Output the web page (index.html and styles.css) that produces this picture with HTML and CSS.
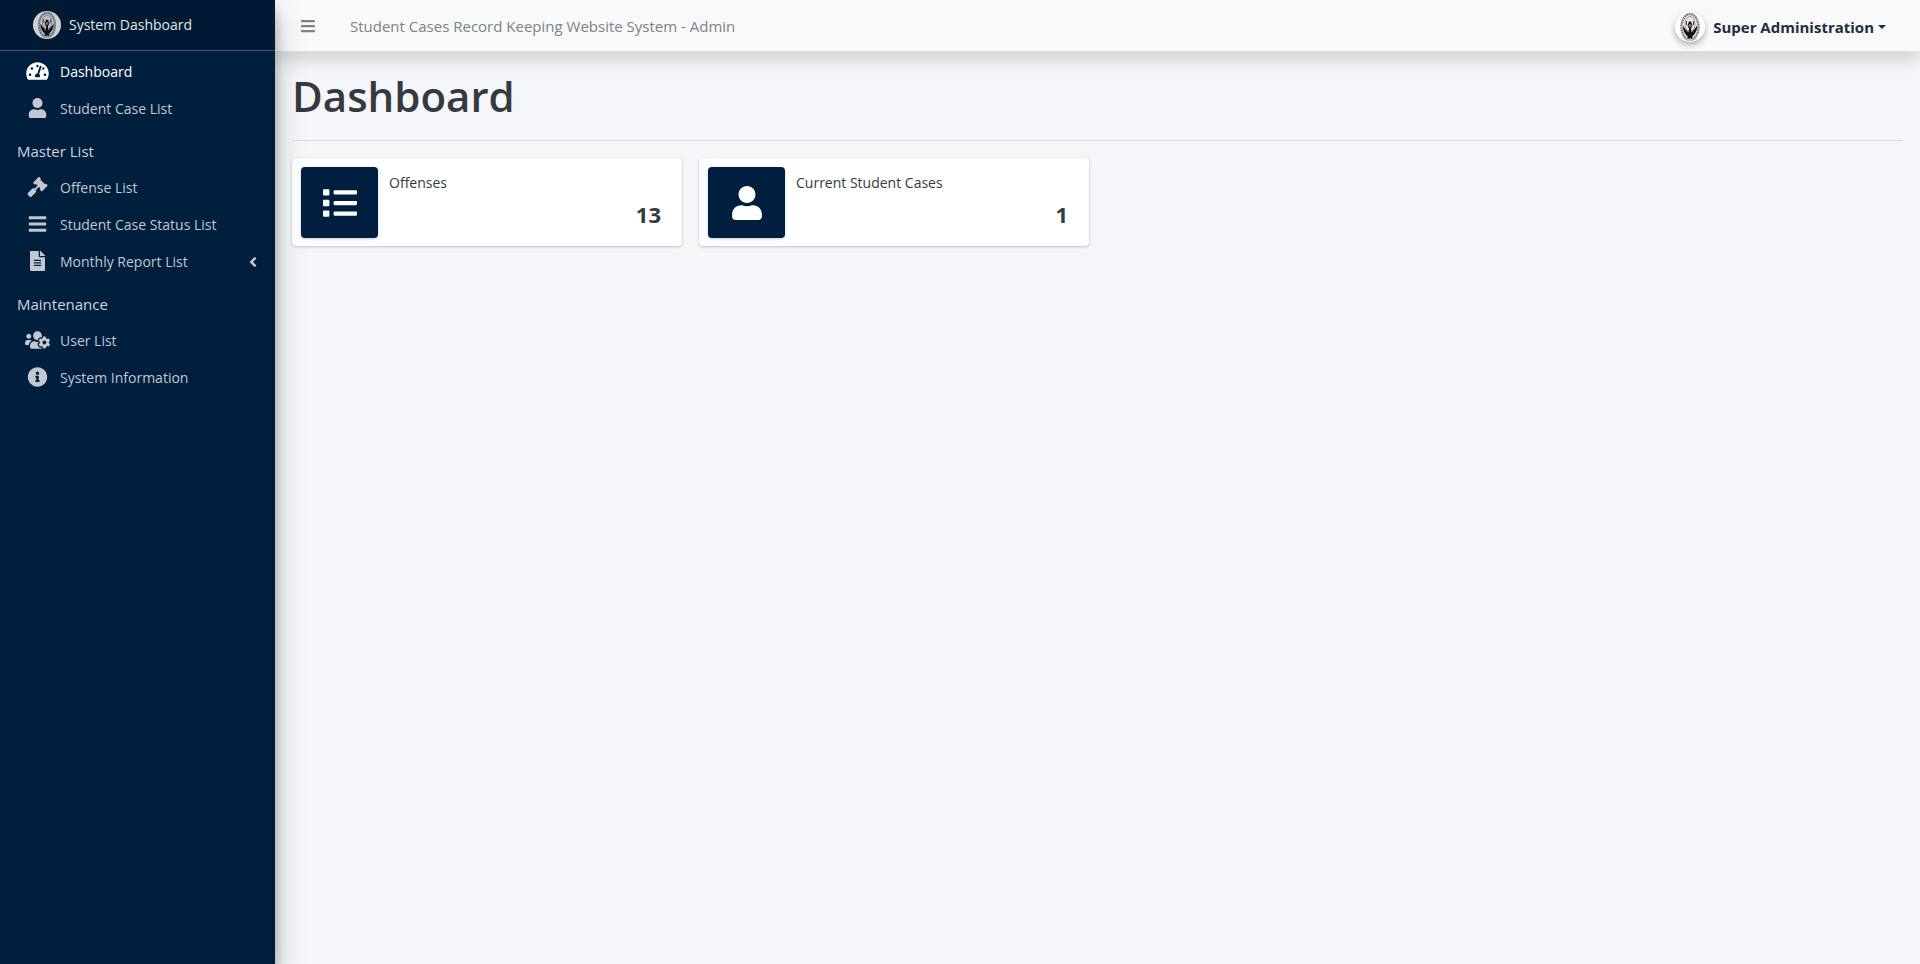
FILE: index.html
```html
<!DOCTYPE html>
<html lang="en">
<head>
<meta charset="utf-8">
<title>Student Cases Record Keeping Website System - Admin</title>
<link rel="stylesheet" href="styles.css">
</head>
<body>
<svg class="sprite" aria-hidden="true">
  <symbol id="i-gauge" viewBox="0 0 576 512"><path d="M288 32C128.94 32 0 160.94 0 320c0 52.8 14.25 102.26 39.06 144.8 5.61 9.62 16.3 15.2 27.44 15.2h443c11.14 0 21.83-5.58 27.44-15.2C561.75 422.26 576 372.8 576 320c0-159.06-128.94-288-288-288zm0 64c14.71 0 26.58 10.13 30.32 23.65-1.11 2.26-2.64 4.23-3.45 6.67l-9.22 27.67c-5.13 3.49-10.97 6.01-17.64 6.01-17.67 0-32-14.33-32-32S270.33 96 288 96zM96 384c-17.67 0-32-14.33-32-32s14.33-32 32-32 32 14.33 32 32-14.33 32-32 32zm48-160c-17.67 0-32-14.33-32-32s14.33-32 32-32 32 14.33 32 32-14.33 32-32 32zm246.77-72.41l-61.33 184C343.13 347.33 352 364.54 352 384c0 11.72-3.38 22.55-8.88 32H232.88c-5.5-9.45-8.88-20.28-8.88-32 0-33.94 26.5-61.43 59.9-63.59l61.34-184.01c4.17-12.56 17.73-19.45 30.36-15.17 12.57 4.19 19.35 17.79 15.17 30.36zm14.66 57.2l15.52-46.55c3.47-1.29 7.13-2.23 11.05-2.23 17.67 0 32 14.33 32 32s-14.33 32-32 32c-11.38-.01-20.89-6.28-26.57-15.22zM480 384c-17.67 0-32-14.33-32-32s14.33-32 32-32 32 14.33 32 32-14.33 32-32 32z"/></symbol>
  <symbol id="i-user" viewBox="0 0 448 512"><path d="M224 256c70.7 0 128-57.3 128-128S294.7 0 224 0 96 57.3 96 128s57.3 128 128 128zm89.6 32h-16.7c-22.2 10.2-46.9 16-72.9 16s-50.6-5.8-72.9-16h-16.7C60.2 288 0 348.2 0 422.4V464c0 26.5 21.5 48 48 48h352c26.5 0 48-21.5 48-48v-41.6c0-74.2-60.2-134.4-134.4-134.4z"/></symbol>
  <symbol id="i-gavel" viewBox="0 0 512 512"><path d="M504.971 199.362l-22.627-22.627c-9.373-9.373-24.569-9.373-33.941 0l-5.657 5.657L329.608 69.255l5.657-5.657c9.373-9.373 9.373-24.569 0-33.941L312.638 7.029c-9.373-9.373-24.569-9.373-33.941 0L154.246 131.48c-9.373 9.373-9.373 24.569 0 33.941l22.627 22.627c9.373 9.373 24.569 9.373 33.941 0l5.657-5.657 39.598 39.598-81.04 81.04-5.657-5.657c-12.497-12.497-32.758-12.497-45.255 0L9.373 412.118c-12.497 12.497-12.497 32.758 0 45.255l45.255 45.255c12.497 12.497 32.758 12.497 45.255 0l114.745-114.745c12.497-12.497 12.497-32.758 0-45.255l-5.657-5.657 81.04-81.04 39.598 39.598-5.657 5.657c-9.373 9.373-9.373 24.569 0 33.941l22.627 22.627c9.373 9.373 24.569 9.373 33.941 0l124.451-124.451c9.372-9.372 9.372-24.568 0-33.941z"/></symbol>
  <symbol id="i-bars" viewBox="0 0 448 512"><path d="M16 132h416c8.837 0 16-7.163 16-16V76c0-8.837-7.163-16-16-16H16C7.163 60 0 67.163 0 76v40c0 8.837 7.163 16 16 16zm0 160h416c8.837 0 16-7.163 16-16v-40c0-8.837-7.163-16-16-16H16c-8.837 0-16 7.163-16 16v40c0 8.837 7.163 16 16 16zm0 160h416c8.837 0 16-7.163 16-16v-40c0-8.837-7.163-16-16-16H16c-8.837 0-16 7.163-16 16v40c0 8.837 7.163 16 16 16z"/></symbol>
  <symbol id="i-file" viewBox="0 0 384 512"><path d="M224 136V0H24C10.7 0 0 10.7 0 24v464c0 13.3 10.7 24 24 24h336c13.3 0 24-10.7 24-24V160H248c-13.2 0-24-10.8-24-24zm64 236c0 6.6-5.4 12-12 12H108c-6.6 0-12-5.4-12-12v-8c0-6.6 5.4-12 12-12h168c6.6 0 12 5.4 12 12v8zm0-64c0 6.6-5.4 12-12 12H108c-6.6 0-12-5.4-12-12v-8c0-6.6 5.4-12 12-12h168c6.6 0 12 5.4 12 12v8zm0-72v8c0 6.6-5.4 12-12 12H108c-6.6 0-12-5.4-12-12v-8c0-6.6 5.4-12 12-12h168c6.6 0 12 5.4 12 12zm96-114.1v6.1H256V0h6.1c6.4 0 12.5 2.5 17 7l97.9 98c4.5 4.5 7 10.6 7 16.9z"/></symbol>
  <symbol id="i-angle" viewBox="0 0 256 512"><path d="M31.7 239l136-136c9.4-9.4 24.6-9.4 33.9 0l22.6 22.6c9.4 9.4 9.4 24.6 0 33.9L127.9 256l96.4 96.4c9.4 9.4 9.4 24.6 0 33.9L201.7 409c-9.4 9.4-24.6 9.4-33.9 0l-136-136c-9.5-9.4-9.5-24.6-.1-34z"/></symbol>
  <symbol id="i-users" viewBox="0 0 640 512"><path d="M610.5 341.3c2.6-14.1 2.6-28.5 0-42.6l25.8-14.9c3-1.7 4.3-5.2 3.3-8.5-6.7-21.6-18.2-41.2-33.2-57.4-2.3-2.5-6-3.1-9-1.4l-25.8 14.9c-10.9-9.3-23.4-16.5-36.9-21.3v-29.8c0-3.4-2.4-6.4-5.7-7.1-22.3-5-45-4.8-66.2 0-3.3.7-5.7 3.7-5.7 7.1v29.8c-13.5 4.8-26 12-36.9 21.3l-25.8-14.9c-2.9-1.7-6.7-1.1-9 1.4-15 16.2-26.5 35.8-33.2 57.4-1 3.3.4 6.8 3.3 8.5l25.8 14.9c-2.6 14.1-2.6 28.5 0 42.6l-25.8 14.9c-3 1.7-4.3 5.2-3.3 8.5 6.7 21.6 18.2 41.1 33.2 57.4 2.3 2.5 6 3.1 9 1.4l25.8-14.9c10.9 9.3 23.4 16.5 36.9 21.3v29.8c0 3.4 2.4 6.4 5.7 7.1 22.3 5 45 4.8 66.2 0 3.3-.7 5.7-3.7 5.7-7.1v-29.8c13.5-4.8 26-12 36.9-21.3l25.8 14.9c2.9 1.7 6.7 1.1 9-1.4 15-16.2 26.5-35.8 33.2-57.4 1-3.3-.4-6.8-3.3-8.5l-25.8-14.9zM496 368.5c-26.8 0-48.5-21.8-48.5-48.5s21.8-48.5 48.5-48.5 48.5 21.8 48.5 48.5-21.7 48.5-48.5 48.5zM96 224c35.3 0 64-28.7 64-64s-28.7-64-64-64-64 28.7-64 64 28.7 64 64 64zm224 32c1.9 0 3.7-.5 5.6-.6 8.3-21.7 20.5-42.1 36.3-59.2 7.4-8 17.9-12.6 28.9-12.6 6.9 0 13.7 1.8 19.6 5.3l7.9 4.6c.8-.5 1.6-.9 2.4-1.4 7-14.6 11.2-30.8 11.2-48 0-61.9-50.1-112-112-112S208 82.1 208 144c0 61.9 50.1 112 112 112zm105.2 194.5c-2.3-1.2-4.6-2.6-6.8-3.9-8.2 4.8-15.3 9.8-27.5 9.8-10.9 0-21.4-4.6-28.9-12.6-18.3-19.8-32.3-43.9-40.2-69.6-10.7-34.5 24.9-49.7 25.8-50.3-.1-2.6-.1-5.2 0-7.8l-7.9-4.6c-3.8-2.2-7-5-9.8-8.1-3.3.2-6.5.6-9.8.6-24.6 0-47.6-6-68.5-16h-8.3C179.6 288 128 339.6 128 403.2V432c0 26.5 21.5 48 48 48h255.4c-3.7-6-6.2-12.8-6.2-20.3v-9.2zM173.1 274.6C161.5 263.1 145.6 256 128 256H64c-35.3 0-64 28.7-64 64v32c0 17.7 14.3 32 32 32h65.9c6.3-47.4 34.9-87.3 75.2-109.4z"/></symbol>
  <symbol id="i-info" viewBox="0 0 512 512"><path d="M256 8C119.043 8 8 119.083 8 256c0 136.997 111.043 248 248 248s248-111.003 248-248C504 119.083 392.957 8 256 8zm0 110c23.196 0 42 18.804 42 42s-18.804 42-42 42-42-18.804-42-42 18.804-42 42-42zm56 254c0 6.627-5.373 12-12 12h-88c-6.627 0-12-5.373-12-12v-24c0-6.627 5.373-12 12-12h12v-64h-12c-6.627 0-12-5.373-12-12v-24c0-6.627 5.373-12 12-12h64c6.627 0 12 5.373 12 12v100h12c6.627 0 12 5.373 12 12v24z"/></symbol>
  <symbol id="i-list" viewBox="0 0 512 512"><path d="M80 368H16a16 16 0 0 0-16 16v64a16 16 0 0 0 16 16h64a16 16 0 0 0 16-16v-64a16 16 0 0 0-16-16zm0-320H16A16 16 0 0 0 0 64v64a16 16 0 0 0 16 16h64a16 16 0 0 0 16-16V64a16 16 0 0 0-16-16zm0 160H16a16 16 0 0 0-16 16v64a16 16 0 0 0 16 16h64a16 16 0 0 0 16-16v-64a16 16 0 0 0-16-16zm416 176H176a16 16 0 0 0-16 16v32a16 16 0 0 0 16 16h320a16 16 0 0 0 16-16v-32a16 16 0 0 0-16-16zm0-320H176a16 16 0 0 0-16 16v32a16 16 0 0 0 16 16h320a16 16 0 0 0 16-16V80a16 16 0 0 0-16-16zm0 160H176a16 16 0 0 0-16 16v32a16 16 0 0 0 16 16h320a16 16 0 0 0 16-16v-32a16 16 0 0 0-16-16z"/></symbol>
  <symbol id="i-crest" viewBox="0 0 60 60">
    <ellipse cx="30" cy="30" rx="17" ry="26" fill="#f4f4f4" stroke="#b4b4b4" stroke-width="5"/>
    <ellipse cx="30" cy="30" rx="17" ry="26" fill="none" stroke="#777" stroke-width="4" stroke-dasharray="2 3"/>
    <ellipse cx="30" cy="24" rx="10" ry="15" fill="#e8e8e8" stroke="#999" stroke-width="2"/>
    <path d="M16 27c2 4 6 8 11 14l1-8-3-6 3-8h4l3 8-3 6 1 8c5-6 9-10 11-14 1 9-3 16-9 22v4H25v-4c-6-6-10-13-9-22z" fill="#141414"/>
    <path d="M23 18v8M37 18v8" stroke="#444" stroke-width="2"/>
    <circle cx="30" cy="27" r="3" fill="#b77"/>
    <path d="M23 56h14" stroke="#ccc" stroke-width="3"/>
  </symbol>
</svg>
<div class="app">
  <aside class="sidebar">
    <a class="brand" href="#"><svg class="brand-logo" role="img" aria-label="Logo"><use href="#i-crest"/></svg><span>System Dashboard</span></a>
    <nav class="menu">
      <a class="item active" href="#"><svg class="icon"><use href="#i-gauge"/></svg><span>Dashboard</span></a>
      <a class="item" href="#"><svg class="icon"><use href="#i-user"/></svg><span>Student Case List</span></a>
      <h2 class="group">Master List</h2>
      <a class="item" href="#"><svg class="icon"><use href="#i-gavel"/></svg><span>Offense List</span></a>
      <a class="item" href="#"><svg class="icon"><use href="#i-bars"/></svg><span>Student Case Status List</span></a>
      <a class="item" href="#"><svg class="icon"><use href="#i-file"/></svg><span>Monthly Report List</span><svg class="angle"><use href="#i-angle"/></svg></a>
      <h2 class="group">Maintenance</h2>
      <a class="item" href="#"><svg class="icon"><use href="#i-users"/></svg><span>User List</span></a>
      <a class="item" href="#"><svg class="icon"><use href="#i-info"/></svg><span>System Information</span></a>
    </nav>
  </aside>
  <div class="page">
    <header class="topbar">
      <button class="toggle" type="button" aria-label="Toggle menu"><svg class="toggle-icon"><use href="#i-bars"/></svg></button>
      <a class="site" href="#">Student Cases Record Keeping Website System - Admin</a>
      <button class="account" type="button"><svg class="avatar"><use href="#i-crest"/></svg><span>Super Administration</span><span class="caret"></span></button>
    </header>
    <main class="content">
      <h1 class="title">Dashboard</h1>
      <hr class="rule">
      <div class="cards">
        <section class="card">
          <div class="card-icon"><svg class="card-glyph"><use href="#i-list"/></svg></div>
          <div class="card-body"><span class="card-label">Offenses</span><span class="card-count">13</span></div>
        </section>
        <section class="card">
          <div class="card-icon"><svg class="card-glyph"><use href="#i-user"/></svg></div>
          <div class="card-body"><span class="card-label">Current Student Cases</span><span class="card-count">1</span></div>
        </section>
      </div>
    </main>
  </div>
</div>
</body>
</html>
```
FILE: styles.css
```css
* { box-sizing: border-box; }
body {
  margin: 0;
  background: #f4f6f9;
  color: #343a40;
  font: 15px/24px "Open Sans", "Noto Sans", sans-serif;
}
a { color: inherit; text-decoration: none; }
button { border: 0; padding: 0; background: none; font: inherit; color: inherit; cursor: pointer; }
svg { fill: currentColor; flex: none; }
.sprite { display: none; }
.app { display: flex; min-height: 100vh; }

.sidebar {
  position: relative;
  z-index: 2;
  flex: none;
  width: 275px;
  background: #001f3f;
  color: #c2c7d0;
  font-size: 14px;
  box-shadow: 0 14px 28px rgba(0, 0, 0, .25), 0 10px 10px rgba(0, 0, 0, .22);
}
.brand {
  display: flex;
  align-items: center;
  gap: 8px;
  height: 51px;
  padding: 0 33px;
  border-bottom: 1px solid #4b545c;
  background: #001a33;
  color: #e3e6e9;
}
.brand-logo { width: 28px; height: 28px; border-radius: 50%; background: #fff; opacity: .8; }
.menu { display: flex; flex-direction: column; padding-top: 2px; }
.item { display: flex; align-items: center; height: 37px; padding: 0 18px 0 24px; }
.item.active { color: #fff; }
.icon { width: 27px; height: 20px; margin: 0 9px 2px 0; }
.angle { width: 8px; height: 16px; margin-left: auto; }
.group { margin: 0; padding: 12px 17px 6px; font-size: 15px; line-height: 24px; font-weight: 400; color: #d0d4db; }

.page { flex: 1; min-width: 0; }
.topbar {
  display: flex;
  align-items: center;
  height: 52px;
  padding: 0 34px 0 26px;
  border-bottom: 1px solid #dee2e6;
  background: #f8f9fa;
  color: #808283;
  box-shadow: 0 8px 16px rgba(0, 0, 0, .15);
}
.toggle { display: flex; margin-right: 35px; }
.toggle-icon { width: 14px; height: 16px; }
.account { display: flex; align-items: center; gap: 8px; padding-top: 3px; margin-left: auto; color: #1f2d3d; font-weight: 700; }
.avatar { width: 30px; height: 30px; border-radius: 50%; background: #fff; box-shadow: 0 3px 6px rgba(0, 0, 0, .3); }
.caret { border: 4px solid transparent; border-top-color: currentColor; border-bottom: 0; margin-left: -4px; }

.content { padding: 16px 17px; }
.title { margin: 0; font-size: 42px; line-height: 56px; font-weight: 600; }
.rule { margin: 16px 0 17px; border: 0; border-top: 1px solid #dadde0; }
.cards { display: grid; grid-template-columns: repeat(4, 1fr); gap: 17px; }
.card {
  display: flex;
  gap: 11px;
  padding: 9px 9px 8px;
  border-radius: 4px;
  background: #fff;
  box-shadow: 0 0 1px rgba(0, 0, 0, .13), 0 1px 3px rgba(0, 0, 0, .2);
}
.card-icon {
  display: flex;
  align-items: center;
  justify-content: center;
  width: 77px;
  height: 71px;
  border-radius: 4px;
  background: #001f3f;
  color: #fff;
  box-shadow: 0 1px 3px rgba(0, 0, 0, .2);
}
.card-glyph { width: 34px; height: 34px; }
.card-body { display: flex; flex: 1; flex-direction: column; padding: 4px 12px 0 0; }
.card-label { font-size: 14px; }
.card-count { align-self: flex-end; margin-top: 3px; font-size: 22px; line-height: 32px; font-weight: 700; }
```
